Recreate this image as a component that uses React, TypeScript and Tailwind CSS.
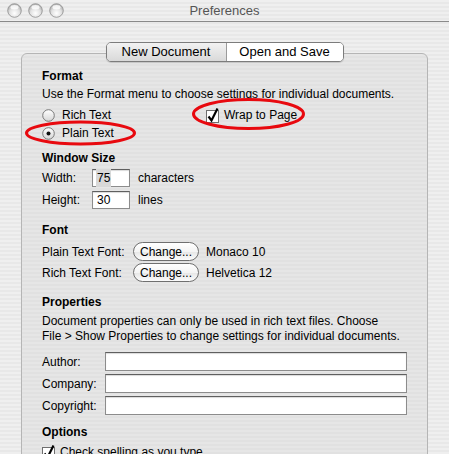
const FONT = "font-['Liberation_Sans','Arial',sans-serif]";

function TrafficLight() {
  return (
    <svg width="15" height="15" viewBox="0 0 15 15">
      <defs>
        <radialGradient id="tl" cx="50%" cy="70%" r="60%">
          <stop offset="0%" stopColor="#ffffff" />
          <stop offset="60%" stopColor="#e2e2e2" />
          <stop offset="100%" stopColor="#b5b5b5" />
        </radialGradient>
      </defs>
      <circle cx="7.5" cy="7.5" r="6.8" fill="url(#tl)" stroke="#8e8e8e" strokeWidth="0.8" />
      <ellipse cx="7.5" cy="4.2" rx="4" ry="2.2" fill="#ffffff" opacity="0.8" />
    </svg>
  );
}

function Radio({ checked }: { checked?: boolean }) {
  return (
    <svg width="13" height="13" viewBox="0 0 13 13" className="shrink-0">
      <defs>
        <linearGradient id="rg" x1="0" y1="0" x2="0" y2="1">
          <stop offset="0%" stopColor="#ffffff" />
          <stop offset="100%" stopColor="#d6d6d6" />
        </linearGradient>
      </defs>
      <circle cx="6.5" cy="6.5" r="5.8" fill="url(#rg)" stroke="#6e6e6e" strokeWidth="0.9" />
      {checked && <circle cx="6.5" cy="6.5" r="2" fill="#111" />}
    </svg>
  );
}

function Checkbox() {
  return (
    <svg width="14" height="15" viewBox="0 0 14 15" className="shrink-0 overflow-visible">
      <rect x="0.5" y="2.5" width="12" height="12" fill="#ffffff" stroke="#6e6e6e" />
      <path d="M2.5 8.5 L5.5 12.5 L11.5 0.5" fill="none" stroke="#000" strokeWidth="2.2" />
    </svg>
  );
}

function Field({ value, selected, className }: { value?: string; selected?: boolean; className: string }) {
  return (
    <div
      className={`flex items-center border border-[#8c8c8c] border-t-[#5f5f5f] bg-white px-[3px] shadow-[inset_0_1px_1px_rgba(0,0,0,0.15)] ${className}`}
    >
      {value && <span className={selected ? "bg-[#d8d8d8] px-px" : "px-px"}>{value}</span>}
    </div>
  );
}

function PushButton({ label }: { label: string }) {
  return (
    <div className="flex h-[19px] w-[66px] items-center justify-center rounded-full border border-[#6f6f6f] bg-[linear-gradient(180deg,#ffffff_0%,#f4f4f4_50%,#e6e6e6_51%,#fbfbfb_100%)] text-[12px]">
      {label}
    </div>
  );
}

function Heading({ children, className = "" }: { children: string; className?: string }) {
  return <p className={`font-bold leading-[16px] ${className}`}>{children}</p>;
}

export default function App() {
  return (
    <div
      className={`relative h-[454px] w-[449px] overflow-hidden bg-[repeating-linear-gradient(180deg,#efefef_0px,#efefef_2px,#e8e8e8_2px,#e8e8e8_4px)] text-[12px] text-black ${FONT}`}
    >
      {/* title bar */}
      <div className="relative flex h-[22px] items-center border-b border-[#8a8a8a]">
        <div className="flex gap-[6px] pl-[7px]">
          <TrafficLight />
          <TrafficLight />
          <TrafficLight />
        </div>
        <div className="absolute inset-0 flex items-center justify-center text-[13px] text-[#555]">
          Preferences
        </div>
      </div>

      <div className="px-[21px] pt-[20px]">
        {/* segmented tabs */}
        <div className="relative z-10 -mb-[9px] flex justify-center">
          <div className="flex h-[20px] overflow-hidden rounded-[5px] border border-[#7c7c7c] text-[13px] shadow-[0_1px_1px_rgba(0,0,0,0.15)]">
            <div className="flex w-[119px] items-center justify-center bg-[linear-gradient(180deg,#f2f2f2,#d9d9d9)]">
              New Document
            </div>
            <div className="flex w-[117px] items-center justify-center border-l border-[#9a9a9a] bg-white">
              Open and Save
            </div>
          </div>
        </div>

        {/* panel */}
        <div className="h-[420px] rounded-[6px] border border-[#b5b5b5] bg-[repeating-linear-gradient(180deg,#e6e6e6_0px,#e6e6e6_2px,#e1e1e1_2px,#e1e1e1_4px)] px-[20px] pt-[14px]">
          <Heading>Format</Heading>
          <p className="mt-[2px] leading-[16px]">Use the Format menu to choose settings for individual documents.</p>
          <div className="mt-[4px] flex h-[18px] items-center">
            <div className="flex w-[164px] items-center gap-[7px]">
              <Radio />
              <span>Rich Text</span>
            </div>
            <div className="flex items-center gap-[4px]">
              <Checkbox />
              <span>Wrap to Page</span>
            </div>
          </div>
          <div className="flex h-[18px] items-center gap-[7px]">
            <Radio checked />
            <span>Plain Text</span>
          </div>

          <Heading className="mt-[8px]">Window Size</Heading>
          <div className="mt-[3px] flex h-[18px] items-center">
            <span className="w-[50px]">Width:</span>
            <Field value="75" selected className="h-[18px] w-[38px]" />
            <span className="ml-[8px]">characters</span>
          </div>
          <div className="mt-[4px] flex h-[18px] items-center">
            <span className="w-[50px]">Height:</span>
            <Field value="30" className="h-[18px] w-[38px]" />
            <span className="ml-[8px]">lines</span>
          </div>

          <Heading className="mt-[13px]">Font</Heading>
          <div className="mt-[4px] flex h-[19px] items-center">
            <span className="w-[91px]">Plain Text Font:</span>
            <PushButton label="Change..." />
            <span className="ml-[7px]">Monaco 10</span>
          </div>
          <div className="mt-[2px] flex h-[19px] items-center">
            <span className="w-[91px]">Rich Text Font:</span>
            <PushButton label="Change..." />
            <span className="ml-[7px]">Helvetica 12</span>
          </div>

          <Heading className="mt-[12px]">Properties</Heading>
          <p className="mt-[4px] leading-[15px]">
            Document properties can only be used in rich text files. Choose
            <br />
            File &gt; Show Properties to change settings for individual documents.
          </p>
          <div className="mt-[8px] flex flex-col gap-[3px]">
            {["Author:", "Company:", "Copyright:"].map((label) => (
              <div key={label} className="flex h-[19px] items-center">
                <span className="w-[63px]">{label}</span>
                <Field className="h-[19px] flex-1" />
              </div>
            ))}
          </div>

          <Heading className="mt-[9px]">Options</Heading>
          <div className="mt-[4px] flex h-[16px] items-center gap-[4px]">
            <Checkbox />
            <span>Check spelling as you type</span>
          </div>
        </div>
      </div>

      {/* annotation ellipses drawn over the dialog */}
      <svg className="pointer-events-none absolute left-0 top-0" width="449" height="454">
        <ellipse cx="80.5" cy="133" rx="54" ry="11" fill="none" stroke="#e8090f" strokeWidth="3" />
        <ellipse cx="248.5" cy="114" rx="55" ry="14.5" fill="none" stroke="#e8090f" strokeWidth="3" />
      </svg>
    </div>
  );
}
